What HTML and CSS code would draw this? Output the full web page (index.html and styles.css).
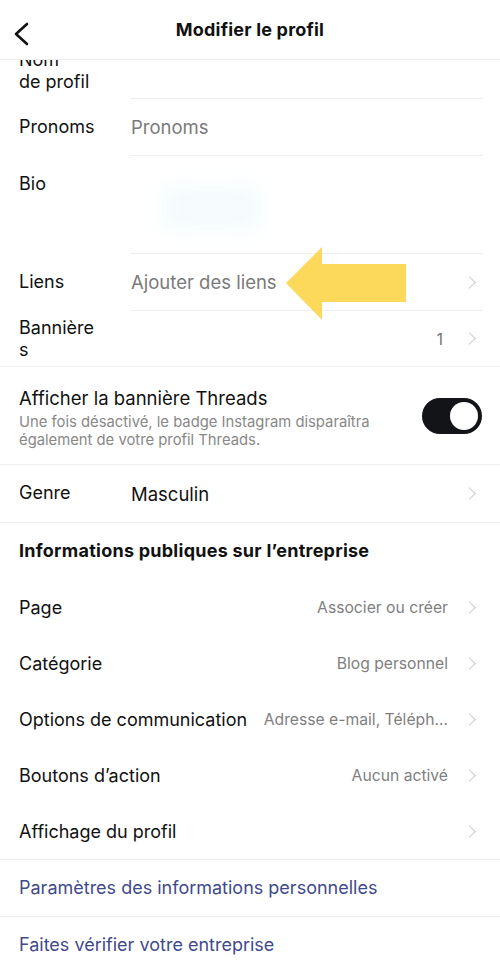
FILE: index.html
```html
<!DOCTYPE html>
<html lang="fr">
<head>
<meta charset="utf-8">
<title>Modifier le profil</title>
<link rel="stylesheet" href="styles.css">
</head>
<body>
<div class="page">
  <header class="header">
    <svg class="back" width="16" height="24" viewBox="0 0 16 24"><polyline points="13,2 2,12 13,22" fill="none" stroke="#111" stroke-width="2.6" stroke-linecap="round" stroke-linejoin="round"/></svg>
    <h1 class="title">Modifier le profil</h1>
  </header>

  <main class="content">
    <section class="group">
      <div class="row row-tight row-name">
        <div class="label">Nom<br>de profil</div>
        <div class="value"></div>
      </div>
      <div class="row">
        <div class="label">Pronoms</div>
        <div class="value"><span class="placeholder">Pronoms</span></div>
      </div>
      <div class="row row-bio">
        <div class="label">Bio</div>
        <div class="value value-bio"><span class="blur"></span></div>
      </div>
      <div class="row">
        <div class="label">Liens</div>
        <div class="value"><span class="placeholder">Ajouter des liens</span><span class="spacer"></span><span class="chev"></span></div>
      </div>
      <div class="row row-tight row-last">
        <div class="label">Bannière<br>s</div>
        <div class="value"><span class="spacer"></span><span class="count">1</span><span class="chev"></span></div>
      </div>
    </section>

    <section class="threads">
      <div class="threads-text">
        <div class="threads-title">Afficher la bannière Threads</div>
        <div class="threads-desc">Une fois désactivé, le badge Instagram disparaîtra également de votre profil Threads.</div>
      </div>
      <div class="toggle"><span class="knob"></span></div>
    </section>

    <section class="group">
      <div class="row row-last">
        <div class="label">Genre</div>
        <div class="value"><span class="filled">Masculin</span><span class="spacer"></span><span class="chev"></span></div>
      </div>
    </section>

    <section class="biz">
      <h2 class="biz-title">Informations publiques sur l’entreprise</h2>
      <div class="line"><span class="line-label">Page</span><span class="line-value">Associer ou créer</span><span class="chev"></span></div>
      <div class="line"><span class="line-label">Catégorie</span><span class="line-value">Blog personnel</span><span class="chev"></span></div>
      <div class="line"><span class="line-label">Options de communication</span><span class="line-value">Adresse e-mail, Téléph...</span><span class="chev"></span></div>
      <div class="line"><span class="line-label">Boutons d’action</span><span class="line-value">Aucun activé</span><span class="chev"></span></div>
      <div class="line"><span class="line-label">Affichage du profil</span><span class="line-value"></span><span class="chev"></span></div>
    </section>

    <section class="links">
      <div class="link">Paramètres des informations personnelles</div>
      <div class="link">Faites vérifier votre entreprise</div>
    </section>
  </main>

  <svg class="arrow" width="122" height="76" viewBox="0 0 122 76"><polygon points="0,36 36,0 36,17 120,17 120,55 36,55 36,73" fill="#fcd95a"/></svg>
</div>
</body>
</html>
```

FILE: styles.css
```css
* { box-sizing: border-box; margin: 0; padding: 0; }
html, body { background: #fff; }
body {
  font-family: "Inter", "Liberation Sans", Arial, sans-serif;
  color: #111;
  overflow: hidden;
}
.page { position: relative; width: 500px; height: 963px; overflow: hidden; }

.header {
  position: relative;
  z-index: 2;
  height: 60px;
  background: #fff;
  border-bottom: 1px solid #eeeeee;
  display: flex;
  align-items: center;
  justify-content: center;
}
.back { position: absolute; left: 14px; top: 22px; }
.title { font-size: 18px; font-weight: 700; letter-spacing: 0.2px; }

.content { margin-top: -17px; }

.row {
  display: grid;
  grid-template-columns: 111px 1fr;
  padding-left: 19px;
  padding-right: 17px;
  font-size: 18px;
  line-height: 22px;
}
.label { padding: 17px 0 18px; }
.value {
  display: flex;
  align-items: center;
  border-bottom: 1px solid #efefef;
  padding-left: 1px;
}
.row-tight .label { padding: 6px 0 5px; }
.row-name .label { padding: 6px 0 6px; }
.row-last .value { border-bottom: none; }
.row-bio .value { align-items: flex-start; }
.row-bio .label { padding-bottom: 59px; }
.group { border-bottom: 1px solid #eeeeee; }

.placeholder { color: #7a7a7a; font-size: 18.5px; }
.filled { color: #111; font-size: 18.5px; }
.spacer { flex: 1; }
.count { color: #777; font-size: 16px; margin-right: 22px; }

.chev {
  width: 9px;
  height: 9px;
  border-top: 1.3px solid #cacaca;
  border-right: 1.3px solid #cacaca;
  transform: rotate(45deg);
  margin-right: 9px;
  flex: none;
}

.value-bio { position: relative; }
.blur {
  display: block;
  width: 100px;
  height: 44px;
  margin: 30px 0 0 30px;
  background: #f4fbfd;
  filter: blur(10px);
  border-radius: 10px;
}

.threads {
  display: flex;
  align-items: center;
  padding: 20px 18px 15px 19px;
  border-bottom: 1px solid #eeeeee;
}
.threads-text { flex: 1; }
.threads-title { font-size: 18.5px; line-height: 22px; }
.threads-desc {
  margin-top: 4px;
  font-size: 14.8px;
  line-height: 18px;
  color: #888;
  width: 385px;
}
.toggle {
  width: 60px;
  height: 36px;
  border-radius: 18px;
  background: #121417;
  display: flex;
  align-items: center;
  justify-content: flex-end;
  padding-right: 4px;
  margin-top: -4px;
  flex: none;
}
.knob { width: 28px; height: 28px; border-radius: 50%; background: #fff; }

.biz { border-bottom: 1px solid #eeeeee; }
.biz-title {
  font-size: 18px;
  font-weight: 700;
  letter-spacing: 0.25px;
  line-height: 56px;
  height: 56px;
  padding-left: 19px;
}
.line {
  height: 56px;
  display: flex;
  align-items: center;
  padding: 0 17px 0 19px;
  font-size: 18px;
}
.line-label { flex: none; }
.line-value {
  flex: 1;
  text-align: right;
  color: #808080;
  font-size: 15.7px;
  margin-right: 17px;
  white-space: nowrap;
}

.link {
  height: 57px;
  line-height: 56px;
  padding-left: 19px;
  font-size: 18px;
  color: #3f4a8d;
  border-bottom: 1px solid #eeeeee;
}

.arrow { position: absolute; left: 286px; top: 247px; z-index: 3; }
```
